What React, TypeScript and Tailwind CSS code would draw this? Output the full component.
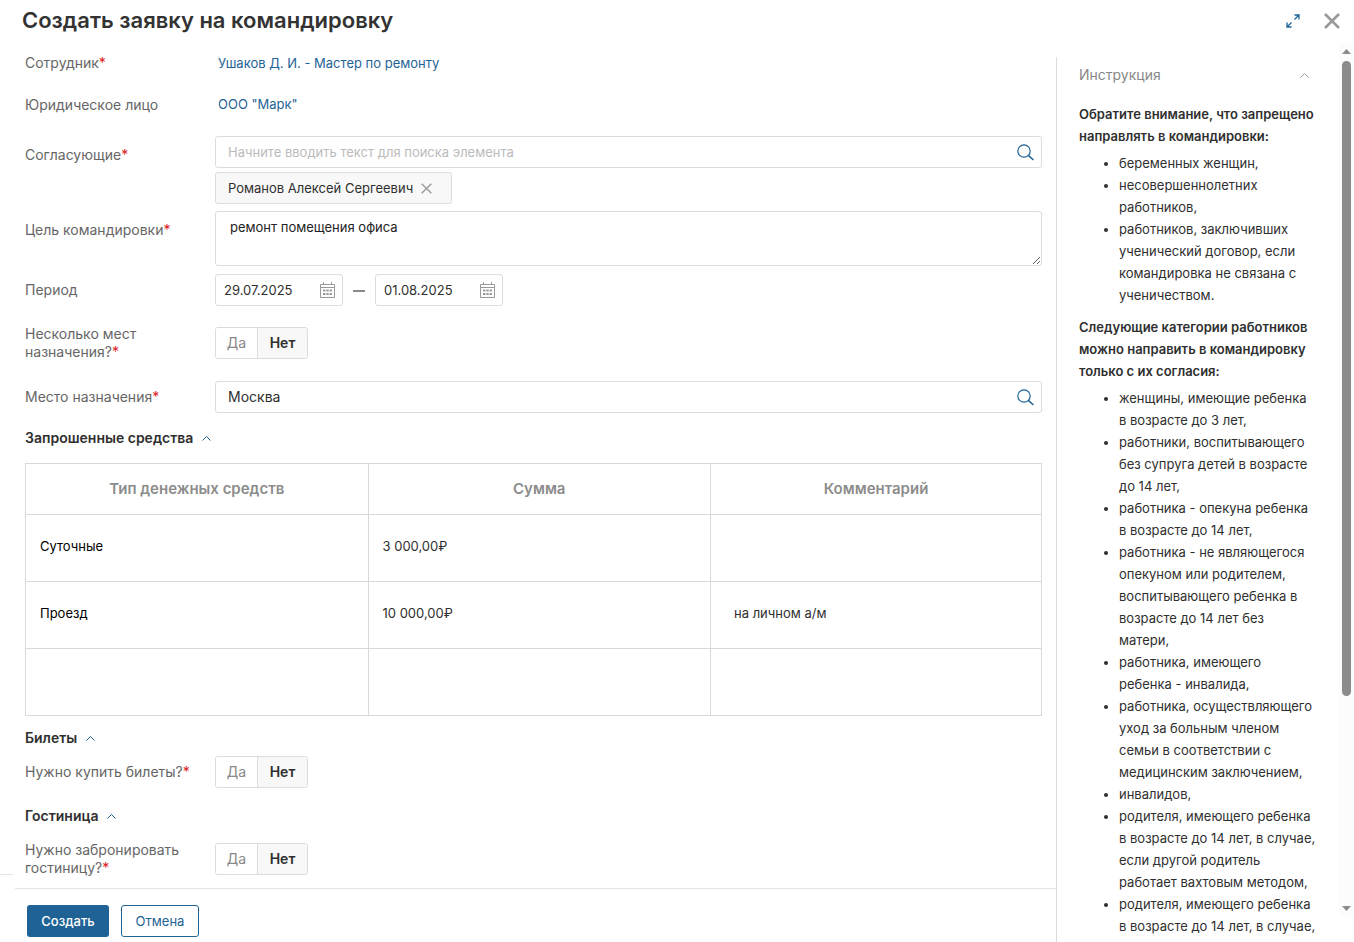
import { useState } from "react";

const text = "font-['Inter','Noto_Sans',sans-serif]";

function Star() {
  return <span className="text-[#e02020]">*</span>;
}

function Chevron({ className = "text-[#1f6396]" }: { className?: string }) {
  return (
    <svg width="9" height="5" viewBox="0 0 9 5" className={className} fill="none" stroke="currentColor" aria-hidden="true">
      <path d="M0.5 4.5L4.5 0.5L8.5 4.5" />
    </svg>
  );
}

function SearchIcon() {
  return (
    <svg width="17" height="17" viewBox="0 0 17 17" fill="none" stroke="currentColor" strokeWidth="1.2" aria-hidden="true">
      <circle cx="7" cy="7" r="6.2" />
      <path d="M11.4 11.4L16.4 16" strokeWidth="1.5" />
    </svg>
  );
}

function CalendarIcon() {
  return (
    <svg width="15" height="16" viewBox="0 0 15 16" fill="none" stroke="currentColor" aria-hidden="true">
      <path d="M0.5 2.5H14.5V15.5H0.5ZM0.5 5.5H14.5M3.5 0V3M11.5 0V3" />
      <path d="M3 8.5H12M3 12H12" strokeWidth="2" strokeDasharray="2.4 0.9" />
    </svg>
  );
}

function CloseIcon({ size, weight }: { size: number; weight: number }) {
  return (
    <svg width={size} height={size} viewBox="0 0 16 16" fill="none" stroke="currentColor" strokeWidth={weight} aria-hidden="true">
      <path d="M1 1L15 15M15 1L1 15" />
    </svg>
  );
}

function YesNo({ id }: { id: string }) {
  const [value, setValue] = useState(false);
  const active = "bg-[#f8f8f8] font-semibold text-[#2f2f2f]";
  const idle = "bg-white text-[#888]";

  return (
    <div role="group" aria-labelledby={id} className="flex h-8 w-[93px] overflow-hidden rounded-[3px] border border-[#dcdcdc]">
      <button type="button" aria-pressed={value} onClick={() => setValue(true)} className={`w-[42px] border-r border-[#dcdcdc] ${value ? active : idle}`}>
        Да
      </button>
      <button type="button" aria-pressed={!value} onClick={() => setValue(false)} className={`flex-1 ${value ? idle : active}`}>
        Нет
      </button>
    </div>
  );
}

function SearchField({ id, placeholder, value }: { id: string; placeholder?: string; value?: string }) {
  return (
    <div className="flex h-8 items-center rounded-[3px] border border-[#dcdcdc]">
      <input id={id} placeholder={placeholder} defaultValue={value} className="min-w-0 flex-1 px-3 text-[#2f2f2f] outline-none placeholder:text-[13px] placeholder:text-[#bbb]" />
      <button type="button" aria-label="Найти" className="px-[7px] text-[#1f6396]">
        <SearchIcon />
      </button>
    </div>
  );
}

function DateField({ label, value }: { label: string; value: string }) {
  return (
    <div className="flex h-8 w-32 items-center rounded-[3px] border border-[#dcdcdc]">
      <input aria-label={label} defaultValue={value} className="w-0 flex-1 pl-2 text-[13px] text-[#2f2f2f] outline-none" />
      <button type="button" aria-label="Открыть календарь" className="px-[7px] text-[#999]">
        <CalendarIcon />
      </button>
    </div>
  );
}

function SectionTitle({ children }: { children: string }) {
  return (
    <h2>
      <button type="button" className="flex items-center gap-[9px] font-semibold text-[#2f2f2f]">
        {children}
        <Chevron />
      </button>
    </h2>
  );
}

const rows = [
  { type: "Суточные", sum: "3 000,00₽", comment: "" },
  { type: "Проезд", sum: "10 000,00₽", comment: "на личном а/м" },
  { type: "", sum: "", comment: "" },
];

const forbidden = [
  ["беременных женщин,"],
  ["несовершеннолетних", "работников,"],
  ["работников, заключивших", "ученический договор, если", "командировка не связана с", "ученичеством."],
];

const consent = [
  ["женщины, имеющие ребенка", "в возрасте до 3 лет,"],
  ["работники, воспитывающего", "без супруга детей в возрасте", "до 14 лет,"],
  ["работника - опекуна ребенка", "в возрасте до 14 лет,"],
  ["работника - не являющегося", "опекуном или родителем,", "воспитывающего ребенка в", "возрасте до 14 лет без", "матери,"],
  ["работника, имеющего", "ребенка - инвалида,"],
  ["работника, осуществляющего", "уход за больным членом", "семьи в соответствии с", "медицинским заключением,"],
  ["инвалидов,"],
  ["родителя, имеющего ребенка", "в возрасте до 14 лет, в случае,", "если другой родитель", "работает вахтовым методом,"],
  ["родителя, имеющего ребенка", "в возрасте до 14 лет, в случае,"],
];

function Rules({ items }: { items: string[][] }) {
  return (
    <ul className="mt-[5px] list-disc pl-10">
      {items.map((lines, i) => (
        <li key={i}>
          {lines.map((line) => (
            <span key={line} className="block whitespace-nowrap">
              {line}
            </span>
          ))}
        </li>
      ))}
    </ul>
  );
}

export default function App() {
  return (
    <div className={`${text} flex h-screen flex-col overflow-hidden bg-white text-sm leading-[18px] text-[#666]`}>
      <header className="flex h-[42px] shrink-0 items-center justify-between pr-[14px] pl-[22px]">
        <h1 className="pb-0.5 text-[22px] leading-7 font-semibold text-[#333]">Создать заявку на командировку</h1>
        <div className="flex items-center gap-6">
          <button type="button" aria-label="Развернуть" className="text-[#1f6396]">
            <svg width="14" height="14" viewBox="0 0 14 14" fill="none" stroke="currentColor" strokeWidth="1.3" aria-hidden="true">
              <path d="M8.5 1H13V5.5M13 1L8.5 5.5M1 8.5V13H5.5M1 13L5.5 8.5" />
            </svg>
          </button>
          <button type="button" aria-label="Закрыть" className="text-[#999]">
            <CloseIcon size={16} weight={2.6} />
          </button>
        </div>
      </header>

      <div className="flex min-h-0 flex-1">
        <main className="flex min-w-0 flex-1 flex-col">
          <div className="flex min-h-0 flex-1">
            <div className="mb-[13px] w-[13px] shrink-0 border-b border-[#e5e5e5]" />
            <form id="trip" className="min-w-0 flex-1 overflow-hidden pr-[14px] pl-3">
              <div className="grid grid-cols-[190px_1fr]">
                <div className="pt-3">Сотрудник<Star /></div>
                <div className="h-[41px] pt-3 pl-[3px]">
                  <a href="#employee" className="text-[13px] text-[#1f6396]">Ушаков Д. И. - Мастер по ремонту</a>
                </div>

                <div className="pt-[13px]">Юридическое лицо</div>
                <div className="h-[53px] pt-3 pl-[3px]">
                  <a href="#company" className="text-[13px] text-[#1f6396]">ООО "Марк"</a>
                </div>

                <label htmlFor="approvers" className="pt-[10px]">Согласующие<Star /></label>
                <div className="h-[75px]">
                  <SearchField id="approvers" placeholder="Начните вводить текст для поиска элемента" />
                  <div className="mt-1 flex h-8 w-[237px] items-center gap-2 rounded-[3px] border border-[#dcdcdc] bg-[#f8f8f8] pl-3 text-[13px] text-[#2f2f2f]">
                    Романов Алексей Сергеевич
                    <button type="button" aria-label="Удалить" className="text-[#999]">
                      <CloseIcon size={11} weight={2} />
                    </button>
                  </div>
                </div>

                <label htmlFor="goal" className="pt-[10px]">Цель командировки<Star /></label>
                <div className="h-[63px]">
                  <textarea id="goal" defaultValue="ремонт помещения офиса" className="block h-[55px] w-full resize-y rounded-[3px] border border-[#dcdcdc] px-[14px] py-[6px] text-[13px] text-[#222] outline-none" />
                </div>

                <div className="pt-[7px]">Период</div>
                <div className="flex h-[53px] items-start">
                  <DateField label="Дата начала" value="29.07.2025" />
                  <span className="mx-[10px] mt-4 h-0.5 w-3 bg-[#8a8a8a]" />
                  <DateField label="Дата окончания" value="01.08.2025" />
                </div>

                <div id="places" className="-mt-[2px]">
                  Несколько мест<br />
                  назначения?<Star />
                </div>
                <div className="h-[54px]"><YesNo id="places" /></div>

                <label htmlFor="place" className="pt-[7px]">Место назначения<Star /></label>
                <SearchField id="place" value="Москва" />
              </div>

              <div className="mt-4"><SectionTitle>Запрошенные средства</SectionTitle></div>
              <table className="mt-4 w-full table-fixed border-collapse text-left text-[13px]">
                <colgroup>
                  <col />
                  <col />
                  <col className="w-[331px]" />
                </colgroup>
                <thead>
                  <tr className="h-[51px] text-center text-[15px] text-[#8c8c8c]">
                    <th className="border border-[#d9d9d9] font-semibold">Тип денежных средств</th>
                    <th className="border border-[#d9d9d9] font-semibold">Сумма</th>
                    <th className="border border-[#d9d9d9] font-semibold">Комментарий</th>
                  </tr>
                </thead>
                <tbody>
                  {rows.map((row, i) => (
                    <tr key={i} className="h-[67px] text-[#2f2f2f]">
                      <td className="border border-[#d9d9d9] px-[14px] pb-1 text-black">{row.type}</td>
                      <td className="border border-[#d9d9d9] px-[14px] pb-1">{row.sum}</td>
                      <td className="border border-[#d9d9d9] px-[23px] pb-1">{row.comment}</td>
                    </tr>
                  ))}
                </tbody>
              </table>

              <div className="mt-[13px]"><SectionTitle>Билеты</SectionTitle></div>
              <div className="mt-[9px] grid grid-cols-[190px_1fr] items-center">
                <div id="tickets">Нужно купить билеты?<Star /></div>
                <YesNo id="tickets" />
              </div>

              <div className="mt-[19px]"><SectionTitle>Гостиница</SectionTitle></div>
              <div className="mt-4 grid grid-cols-[190px_1fr] items-center">
                <div id="hotel">
                  Нужно забронировать<br />
                  гостиницу?<Star />
                </div>
                <YesNo id="hotel" />
              </div>
            </form>
          </div>

          <footer className="ml-[15px] flex h-[54px] shrink-0 gap-3 border-t border-[#e5e5e5] pt-4 pl-3">
            <button type="submit" form="trip" className="h-8 w-[82px] rounded-[3px] bg-[#1f6396] text-[13px] font-medium text-white">Создать</button>
            <button type="button" className="h-8 w-[78px] rounded-[3px] border border-[#1f6396] text-[13px] text-[#1f6396]">Отмена</button>
          </footer>
        </main>

        <aside className="mt-[15px] w-[283px] shrink-0 border-l border-[#dcdcdc] pl-[22px] text-[13px] leading-[22px] text-[#2f2f2f]">
          <button type="button" className="flex h-9 w-[230px] items-center justify-between text-sm text-[#888]">
            Инструкция
            <Chevron className="text-[#999]" />
          </button>
          <p className="mt-[10px] font-semibold whitespace-nowrap">
            Обратите внимание, что запрещено<br />
            направлять в командировки:
          </p>
          <Rules items={forbidden} />
          <p className="mt-[10px] font-semibold whitespace-nowrap">
            Следующие категории работников<br />
            можно направить в командировку<br />
            только с их согласия:
          </p>
          <Rules items={consent} />
        </aside>

        <div className="mt-[1px] mb-[26px] flex w-[15px] shrink-0 flex-col items-center bg-[#fcfcfc]" aria-hidden="true">
          <svg width="9" height="5" viewBox="0 0 9 5" className="mt-[6px]" fill="#8b8b8b"><path d="M0 5L4.5 0L9 5Z" /></svg>
          <div className="mt-[7px] h-[635px] w-[9px] rounded-full bg-[#8b8b8b]" />
          <svg width="9" height="5" viewBox="0 0 9 5" className="mt-auto mb-[5px]" fill="#8b8b8b"><path d="M0 0L4.5 5L9 0Z" /></svg>
        </div>
      </div>
    </div>
  );
}
